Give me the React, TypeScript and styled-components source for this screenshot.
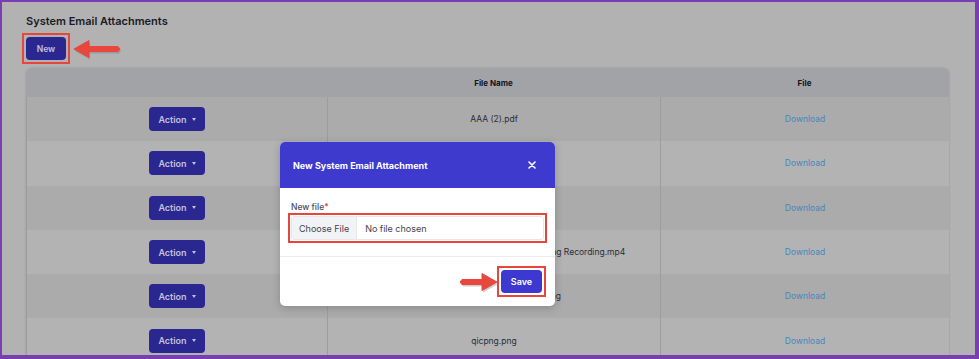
import React from 'react'
import styled, { createGlobalStyle } from 'styled-components'

const GlobalStyle = createGlobalStyle`
	html, body {
		margin: 0;
		padding: 0;
		background: #b2b2b2;
	}
	* {
		box-sizing: border-box;
	}
`

interface FileRow {
	name: string
}

// the page is shown dimmed, as it sits behind the open modal
const rows: FileRow[] = [
	{ name: 'AAA (2).pdf' },
	{ name: 'invoice.pdf' },
	{ name: 'terms.docx' },
	{ name: 'Microsoft Teams Product Weekly Review Meeting Recording.mp4' },
	{ name: 'Screenshot 2023-04-11 0915.png' },
	{ name: 'qicpng.png' },
]

const Frame = styled.div`
	position: relative;
	width: 979px;
	height: 359px;
	overflow: hidden;
	border-style: solid;
	border-color: #7b3db2;
	border-width: 2px 4px 4px 2px;
	background: #b2b2b2;
	font-family: Inter, 'Noto Sans', sans-serif;
	color: #1a1b26;
`

const Page = styled.div`
	padding: 12px 26px 0 24px;
`

const Title = styled.h1`
	margin: 0;
	font-size: 11px;
	line-height: 14px;
	font-weight: 600;
	color: #191a25;
`

const Toolbar = styled.div`
	display: flex;
	align-items: center;
	margin-top: 9px;
`

const Marked = styled.div<{ inset: number }>`
	display: flex;
	border: 2px solid #e8453c;
	padding: ${p => p.inset}px;
	margin: ${p => -(p.inset + 2)}px;
`

const Button = styled.button<{ tone: 'dim' | 'bright' }>`
	display: inline-flex;
	align-items: center;
	justify-content: center;
	gap: 5px;
	border: none;
	border-radius: 4px;
	background: ${p => (p.tone === 'dim' ? '#2a2790' : '#3c38d0')};
	color: ${p => (p.tone === 'dim' ? '#c2c1de' : '#ffffff')};
	font-family: Inter, 'Noto Sans', sans-serif;
	font-weight: 600;
	padding: 0;
	cursor: pointer;
`

const NewButton = styled(Button)`
	width: 40px;
	height: 23px;
	font-size: 8.5px;
`

const ActionButton = styled(Button)`
	width: 56px;
	height: 24px;
	font-size: 9px;
`

const SaveButton = styled(Button)`
	width: 41px;
	height: 23px;
	font-size: 9px;
`

const Caret = styled.span`
	width: 0;
	height: 0;
	border-left: 2.5px solid transparent;
	border-right: 2.5px solid transparent;
	border-top: 3px solid #c2c1de;
`

const ArrowSvg = styled.svg<{ gap: number }>`
	display: block;
	overflow: visible;
	margin: 0 ${p => p.gap}px;
`

const Table = styled.div`
	margin-top: 8px;
	border-radius: 6px 6px 0 0;
	overflow: hidden;
	box-shadow: 0 0 2px rgba(0, 0, 0, 0.2);
`

const Row = styled.div<{ head?: boolean; striped?: boolean }>`
	display: grid;
	grid-template-columns: 301px 333px 1fr;
	height: ${p => (p.head ? '29px' : '44.3px')};
	background: ${p => (p.head ? '#a2a3a7' : p.striped ? '#ababac' : '#b3b3b3')};
`

const Cell = styled.div<{ head?: boolean }>`
	display: flex;
	align-items: center;
	justify-content: center;
	font-size: ${p => (p.head ? '8px' : '8.5px')};
	font-weight: ${p => (p.head ? 700 : 400)};
	color: ${p => (p.head ? '#12131d' : '#2c2d34')};
	white-space: nowrap;
	border-left: ${p => (p.head ? 'none' : '1px solid #9d9d9f')};
`

const DownloadLink = styled.a`
	color: #4587bd;
	font-size: 8.5px;
	text-decoration: none;
`

const Modal = styled.div`
	position: absolute;
	left: 278px;
	top: 140px;
	width: 275px;
	background: #ffffff;
	border-radius: 5px;
	overflow: hidden;
	box-shadow: 0 2px 8px rgba(0, 0, 0, 0.2);
`

const ModalHeader = styled.div`
	display: flex;
	align-items: center;
	justify-content: space-between;
	height: 46px;
	padding: 0 19px 0 13px;
	background: #3e3ace;
	color: #ffffff;
	font-size: 9px;
	font-weight: 700;
`

const ModalBody = styled.div`
	padding: 14px 11px 16px 11px;
	border-bottom: 1px solid #ececf0;
`

const Label = styled.div`
	font-size: 8.5px;
	font-weight: 500;
	color: #4a4c58;
	margin-bottom: 4px;

	span {
		color: #e53b4b;
	}
`

const FileInput = styled.div`
	display: flex;
	align-items: center;
	flex: 1;
	height: 24px;
	border: 1px solid #e6e7eb;
	border-radius: 3px;
	font-size: 9px;
	color: #41434f;
`

const ChooseFile = styled.div`
	display: flex;
	align-items: center;
	height: 100%;
	padding: 0 7px;
	background: #f2f3f7;
	border-right: 1px solid #e6e7eb;
`

const NoFile = styled.div`
	padding-left: 8px;
`

const ModalFooter = styled.div`
	display: flex;
	align-items: center;
	justify-content: flex-end;
	padding: 13px;
`

function RedArrow({ dir, width, gap }: { dir: 'left' | 'right'; width: number; gap: number }) {
	const h = 20
	const head = 15
	const pts =
		dir === 'left'
			? `0,10 ${head},1.5 ${head},7.5 ${width - 2},7.5 ${width},10 ${width - 2},12.5 ${head},12.5 ${head},18.5`
			: `${width},10 ${width - head},1.5 ${width - head},7.5 2,7.5 0,10 2,12.5 ${width - head},12.5 ${width - head},18.5`
	return (
		<ArrowSvg gap={gap} width={width} height={h} viewBox={`0 0 ${width} ${h}`}>
			<polygon points={pts} fill="#6e6e6e" opacity={0.35} transform="translate(1 2)" />
			<polygon points={pts} fill="#e8473d" strokeLinejoin="round" stroke="#e8473d" strokeWidth={1} />
		</ArrowSvg>
	)
}

function CloseIcon() {
	return (
		<svg width="8" height="8" viewBox="0 0 8 8">
			<path d="M1 1 L7 7 M7 1 L1 7" stroke="#ffffff" strokeWidth="1.6" strokeLinecap="round" />
		</svg>
	)
}

export default function App() {
	return (
		<>
			<GlobalStyle />
			<Frame>
				<Page>
					<Title>System Email Attachments</Title>
					<Toolbar>
						<Marked inset={2}>
							<NewButton tone="dim">New</NewButton>
						</Marked>
						<RedArrow dir="left" width={46} gap={8} />
					</Toolbar>
					<Table>
						<Row head>
							<Cell head />
							<Cell head>File Name</Cell>
							<Cell head>File</Cell>
						</Row>
						{rows.map((r, i) => (
							<Row key={i} striped={i % 2 === 0}>
								<Cell>
									<ActionButton tone="dim">
										Action <Caret />
									</ActionButton>
								</Cell>
								<Cell>{r.name}</Cell>
								<Cell>
									<DownloadLink href="#">Download</DownloadLink>
								</Cell>
							</Row>
						))}
					</Table>
				</Page>
				<Modal>
					<ModalHeader>
						New System Email Attachment
						<CloseIcon />
					</ModalHeader>
					<ModalBody>
						<Label>
							New file<span>*</span>
						</Label>
						<Marked inset={1}>
							<FileInput>
								<ChooseFile>Choose File</ChooseFile>
								<NoFile>No file chosen</NoFile>
							</FileInput>
						</Marked>
					</ModalBody>
					<ModalFooter>
						<RedArrow dir="right" width={37} gap={4} />
						<Marked inset={2}>
							<SaveButton tone="bright">Save</SaveButton>
						</Marked>
					</ModalFooter>
				</Modal>
			</Frame>
		</>
	)
}
